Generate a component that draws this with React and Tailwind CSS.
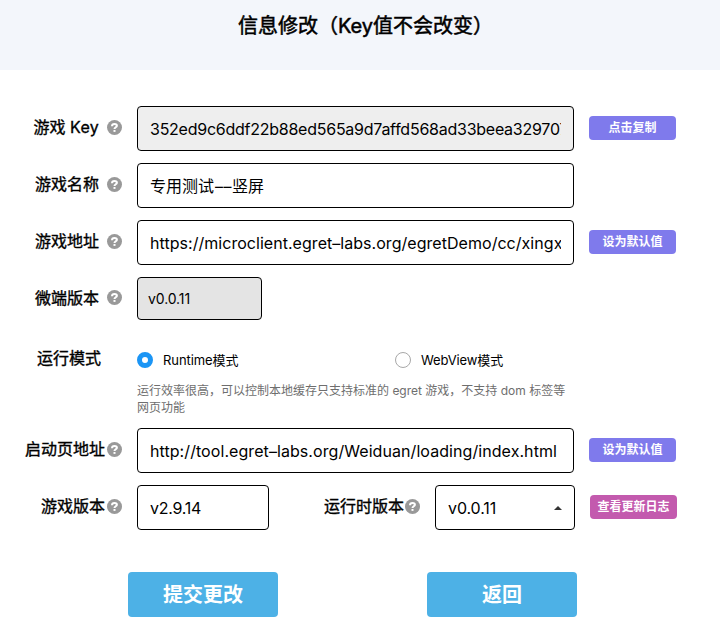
import React from "react";

function Help() {
  return (
    <svg className="mb-[2px] h-[15px] w-[15px] shrink-0" viewBox="0 0 15 15">
      <circle cx="7.5" cy="7.5" r="7.5" fill="#999" />
      <path
        d="M5 6.2C5 4.8 6 3.9 7.5 3.9C9 3.9 9.9 4.6 9.9 5.7C9.9 7.2 7.5 7.3 7.5 9.1"
        fill="none"
        stroke="#fff"
        strokeWidth="2"
      />
      <rect x="6.5" y="10" width="2" height="1.9" fill="#fff" />
    </svg>
  );
}

function Label({ children, gap = "gap-[8px]", pad = "pb-[3px]" }) {
  return (
    <div className={`flex w-[122px] shrink-0 items-center justify-end ${gap}`}>
      <span className={`text-[16px] leading-[20px] whitespace-nowrap [-webkit-text-stroke:0.35px_#000] ${pad}`}>
        {children}
      </span>
      <Help />
    </div>
  );
}

function Field({ children, className = "w-[437px] bg-white" }) {
  return (
    <div className={`ml-[15px] flex h-[45px] shrink-0 items-center rounded-[4px] border border-black px-[12px] ${className}`}>
      <div className="min-w-0 flex-1 overflow-hidden text-[16px] leading-[22px] whitespace-nowrap">
        {children}
      </div>
    </div>
  );
}

function SmallButton({ children, className = "ml-[15px] bg-[#7f7aec]" }) {
  return (
    <button className={`mb-px h-[24px] w-[87px] shrink-0 rounded-[4px] text-[12px] leading-[24px] font-bold whitespace-nowrap text-white ${className}`}>
      {children}
    </button>
  );
}

export default function App() {
  return (
    <div className="h-[624px] w-[720px] overflow-hidden bg-white font-[Inter,'Noto_Sans_CJK_SC',sans-serif] text-black">
      <header className="flex h-[70px] justify-center bg-[#f3f6fb] pt-[11px] pl-[11px]">
        <h1 className="text-[20px] leading-[30px] whitespace-nowrap [-webkit-text-stroke:0.5px_#000]">
          信息修改（Key值不会改变）
        </h1>
      </header>

      <main className="flex flex-col gap-[12px] pt-[36px]">
        <div className="flex h-[45px] items-center">
          <Label>游戏 <span className="tracking-[0.3px]">Key</span></Label>
          <Field className="w-[437px] bg-[#eeeeee]">
            <span className="tracking-[-0.25px]">352ed9c6ddf22b88ed565a9d7affd568ad33beea329707</span>
          </Field>
          <SmallButton>点击复制</SmallButton>
        </div>
        <div className="flex h-[45px] items-center">
          <Label>游戏名称</Label>
          <Field>专用测试<span className="ml-px tracking-[0.5px]">––</span>竖屏</Field>
        </div>
        <div className="flex h-[45px] items-center">
          <Label>游戏地址</Label>
          <Field>
            <span className="tracking-[0.04px]">https://microclient.egret–labs.org/egretDemo/cc/xingxing</span>
          </Field>
          <SmallButton>设为默认值</SmallButton>
        </div>
        <div className="flex h-[43px] items-center">
          <Label pad="pb-px">微端版本</Label>
          <div className="ml-[15px] h-[43px] w-[125px] rounded-[4px] border border-black bg-[#e4e4e4] pl-[10px] text-[14px] leading-[42px] tracking-[-0.1px]">
            v0.0.11
          </div>
        </div>

        <div className="flex h-[96px] pt-[16px]">
          <div className="flex w-[101px] shrink-0 justify-end text-[16px] leading-[20px] [-webkit-text-stroke:0.35px_#000]">
            运行模式
          </div>
          <div className="ml-[36px]">
            <div className="flex h-[24px] items-center text-[13px] leading-[20px]">
              <span className="h-[16px] w-[16px] rounded-full border-[5px] border-[#1b95f5] bg-white" />
              <span className="ml-[10px] w-[232px] tracking-[-0.08px]">Runtime模式</span>
              <span className="h-[16px] w-[16px] rounded-full border border-[#a8a8a8] bg-white" />
              <span className="ml-[10px] tracking-[-0.12px]">WebView模式</span>
            </div>
            <p className="mt-[10px] w-[437px] text-[12px] leading-[17px] whitespace-nowrap text-[#6e6e6e]">
              运行效率很高，可以控制本地缓存只支持标准的 egret 游戏，不支持 dom 标签等
              <br />
              网页功能
            </p>
          </div>
        </div>

        <div className="-mt-[12px] flex h-[45px] items-center">
          <Label gap="gap-[2px]">启动页地址</Label>
          <Field>
            <span className="tracking-[0.07px]">http://tool.egret–labs.org/Weiduan/loading/index.html</span>
          </Field>
          <SmallButton>设为默认值</SmallButton>
        </div>
        <div className="flex h-[45px] items-center">
          <Label gap="gap-[2px]">游戏版本</Label>
          <Field className="w-[132px] bg-white"><span className="tracking-[-0.25px]">v2.9.14</span></Field>
          <div className="flex w-[151px] items-center justify-end gap-[1px]">
            <span className="pb-[3px] text-[16px] leading-[20px] [-webkit-text-stroke:0.35px_#000]">运行时版本</span>
            <Help />
          </div>
          <Field className="w-[140px] bg-white">
            <div className="flex items-center justify-between">
              <span className="tracking-[-0.1px]">v0.0.11</span>
              <svg className="h-[4px] w-[8px]" viewBox="0 0 8 4">
                <path d="M0 4L4 0L8 4Z" fill="#333" />
              </svg>
            </div>
          </Field>
          <SmallButton className="ml-[15px] bg-[#c35aae]">查看更新日志</SmallButton>
        </div>
      </main>

      <footer className="mt-[42px] ml-[128px] flex gap-[149px]">
        <button className="h-[45px] w-[150px] rounded-[4px] bg-[#4db1e6] text-[20px] leading-[47px] font-bold text-white">提交更改</button>
        <button className="h-[45px] w-[150px] rounded-[4px] bg-[#4db1e6] text-[20px] leading-[47px] font-bold text-white">返回</button>
      </footer>
    </div>
  );
}
